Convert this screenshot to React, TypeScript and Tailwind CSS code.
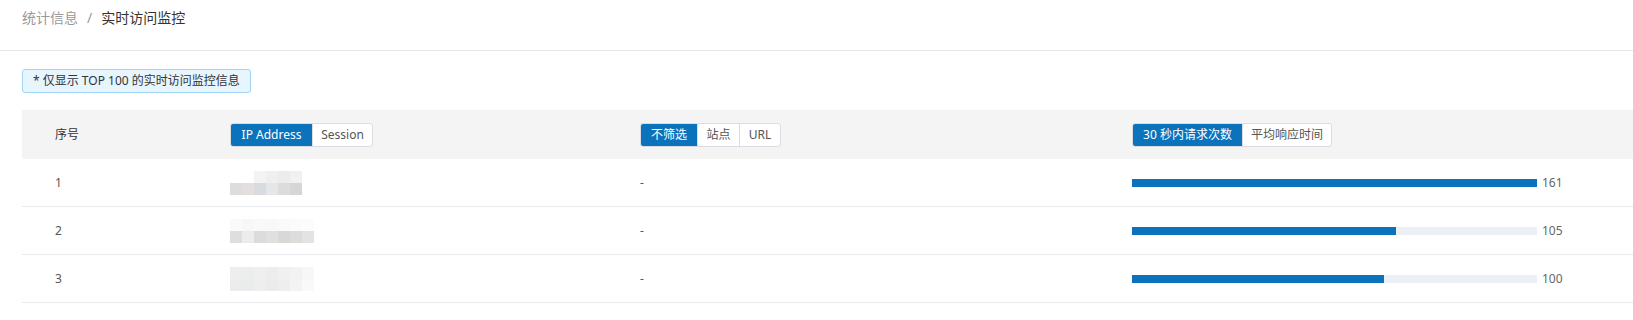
import { useState } from 'react'

type Row = { id: number; count: number; mosaic: string[][] }

const rows: Row[] = [
  { id: 1, count: 161, mosaic: [
    ['transparent','transparent','#f3f3f3','#efefef','#ececec','#f1f1f1'],
    ['#dddddd','#e2dfde','#d9dcdf','#e6e6e6','#dcdcdc','#d6d6d6'],
  ] },
  { id: 2, count: 105, mosaic: [
    ['#fafafa','#f7f7f7','#f9f9f9','#f8f8f8','#fafafa','#fbfbfb','#fcfcfc'],
    ['#dedede','#ececec','#dcdcdc','#e0e0e0','#dad8d7','#dcdcdc','#e3e3e3'],
  ] },
  { id: 3, count: 100, mosaic: [
    ['#eeeeee','#eceded','#efefef','#ededed','#f0f0f0','#f2f2f2','#f7f7f7'],
    ['#ececec','#eaebec','#eeeeee','#ebebeb','#eeeeee','#f3f3f3','#f9f9f9'],
  ] },
]

const max = 161

function Seg({ items, active, onPick }: { items: { k: string; w: string }[]; active: string; onPick: (k: string) => void }) {
  return (
    <div className="inline-flex w-fit h-6 rounded-[3px] border border-[#dadbe3] overflow-hidden bg-white">
      {items.map((it, i) => (
        <button key={it.k} onClick={() => onPick(it.k)}
                className={`${it.w} h-full text-[12px] leading-none flex items-center justify-center ${i > 0 ? 'border-l border-[#dadbe3]' : ''} ${active === it.k ? 'bg-[#0b72bc] text-white' : 'text-[#555]'}`}>
          {it.k}
        </button>
      ))}
    </div>
  )
}

export default function App() {
  const [by, setBy] = useState('IP Address')
  const [filter, setFilter] = useState('不筛选')
  const [metric, setMetric] = useState('30 秒内请求次数')

  return (
    <div className="w-[1633px] h-[320px] bg-white overflow-hidden" style={{ fontFamily: '"Noto Sans", "Noto Sans CJK SC", sans-serif' }}>
      <div className="h-[51px] border-b border-[#e8e8e8] pl-[22px] pt-[6px] flex items-start text-[14px] leading-[24px]">
        <span className="text-[#999]">统计信息</span>
        <span className="text-[#999] mx-[9px]">/</span>
        <span className="text-[#333]">实时访问监控</span>
      </div>

      <div className="px-[22px] pt-[16px]">
        <div className="inline-flex h-[24px] items-center px-[10px] rounded-[3px] border border-[#9fd4f5] bg-[#e7f5ff] text-[12px] text-[#333]">
          * 仅显示 TOP 100 的实时访问监控信息
        </div>

        <div className="mt-[17px] -mr-[22px]">
          <div className="grid grid-cols-[175px_410px_491px_1fr] h-[49px] items-center bg-[#f4f4f4] text-[12px] text-[#333]">
            <div className="pl-[33px]">序号</div>
            <div className="pl-[33px] flex">
              <Seg items={[{ k: 'IP Address', w: 'w-[81px]' }, { k: 'Session', w: 'w-[60px]' }]} active={by} onPick={setBy} />
            </div>
            <div className="pl-[33px] flex">
              <Seg items={[{ k: '不筛选', w: 'w-[56px]' }, { k: '站点', w: 'w-[42px]' }, { k: 'URL', w: 'w-[41px]' }]} active={filter} onPick={setFilter} />
            </div>
            <div className="pl-[34px] flex">
              <Seg items={[{ k: '30 秒内请求次数', w: 'w-[109px]' }, { k: '平均响应时间', w: 'w-[89px]' }]} active={metric} onPick={setMetric} />
            </div>
          </div>

          {rows.map(r => (
            <div key={r.id} className="grid grid-cols-[175px_410px_491px_1fr] h-[48px] items-center border-b border-[#e9e9f0] text-[12px] text-[#555]">
              <div className="pl-[33px]">{r.id}</div>
              <div className="pl-[33px] flex flex-col">
                {r.mosaic.map((line, i) => (
                  <div key={i} className="flex">
                    {line.map((c, j) => <div key={j} className="w-[12px] h-[12px]" style={{ background: c }} />)}
                  </div>
                ))}
              </div>
              <div className="pl-[33px]">-</div>
              <div className="pl-[34px] flex items-center gap-[5px]">
                <div className="w-[405px] h-[8px] bg-[#ebf0f7]">
                  <div className="h-full bg-[#0b72bc]" style={{ width: `${(r.count / max) * 100}%` }} />
                </div>
                <span className="text-[#666]">{r.count}</span>
              </div>
            </div>
          ))}
        </div>
      </div>
    </div>
  )
}
